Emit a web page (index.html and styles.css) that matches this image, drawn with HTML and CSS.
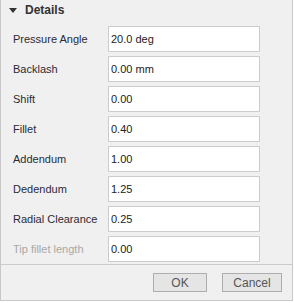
FILE: index.html
```html
<!DOCTYPE html>
<html lang="en">
<head>
    <meta charset="UTF-8">
    <meta name="viewport" content="width=device-width, initial-scale=1.0">
    <title>Details</title>
    <link rel="stylesheet" href="styles.css">
</head>
<body>
    <div class="panel">
        <div class="panel-header">
            <span class="caret"></span>
            <span class="panel-title">Details</span>
        </div>
        <div class="form-rows">
            <label class="field-label">Pressure Angle</label>
            <input class="field-input" type="text" value="20.0 deg">
            <label class="field-label">Backlash</label>
            <input class="field-input" type="text" value="0.00 mm">
            <label class="field-label">Shift</label>
            <input class="field-input" type="text" value="0.00">
            <label class="field-label">Fillet</label>
            <input class="field-input" type="text" value="0.40">
            <label class="field-label">Addendum</label>
            <input class="field-input" type="text" value="1.00">
            <label class="field-label">Dedendum</label>
            <input class="field-input" type="text" value="1.25">
            <label class="field-label">Radial Clearance</label>
            <input class="field-input" type="text" value="0.25">
            <label class="field-label disabled">Tip fillet length</label>
            <input class="field-input" type="text" value="0.00">
        </div>
        <div class="panel-footer">
            <button class="btn btn-ok">OK</button>
            <button class="btn btn-cancel">Cancel</button>
        </div>
    </div>
</body>
</html>
```

FILE: styles.css
```css
body {
    margin: 0;
    padding: 0;
    background-color: #fff;
    font-family: "Liberation Sans", Arial, sans-serif;
    font-size: 11px;
}
.panel {
    width: 293px;
    height: 301px;
    box-sizing: border-box;
    background-color: #f0f0f0;
    border: 1px solid #c8c8c8;
    border-top: none;
}
.panel-header {
    display: flex;
    align-items: center;
    height: 20px;
    padding-left: 8px;
}
.caret {
    width: 0;
    height: 0;
    border-left: 4px solid transparent;
    border-right: 4px solid transparent;
    border-top: 5px solid #333;
    margin-right: 8px;
}
.panel-title {
    font-weight: bold;
    font-size: 12px;
    color: #333;
}
.form-rows {
    display: grid;
    grid-template-columns: 95px 152px;
    row-gap: 4px;
    padding: 6px 0 0 12px;
    align-items: center;
}
.field-label {
    color: #2b2b36;
}
.field-label.disabled {
    color: #a8a8a8;
}
.field-input {
    box-sizing: border-box;
    width: 152px;
    height: 26px;
    margin: 0;
    padding: 0 2px;
    border: 1px solid #cccccc;
    background-color: #fff;
    font-family: "Liberation Sans", Arial, sans-serif;
    font-size: 11px;
    color: #222;
    outline: none;
}
.panel-footer {
    display: flex;
    justify-content: flex-end;
    gap: 15px;
    margin-top: 2px;
    border-top: 1px solid #cccccc;
    padding: 8px 10px 0 0;
}
.btn {
    box-sizing: border-box;
    height: 19px;
    padding: 0;
    border: 1px solid #adadad;
    background-color: #e5e5e5;
    color: #555;
    font-family: "Liberation Sans", Arial, sans-serif;
    font-size: 12px;
}
.btn-ok {
    width: 54px;
}
.btn-cancel {
    width: 60px;
}
```
